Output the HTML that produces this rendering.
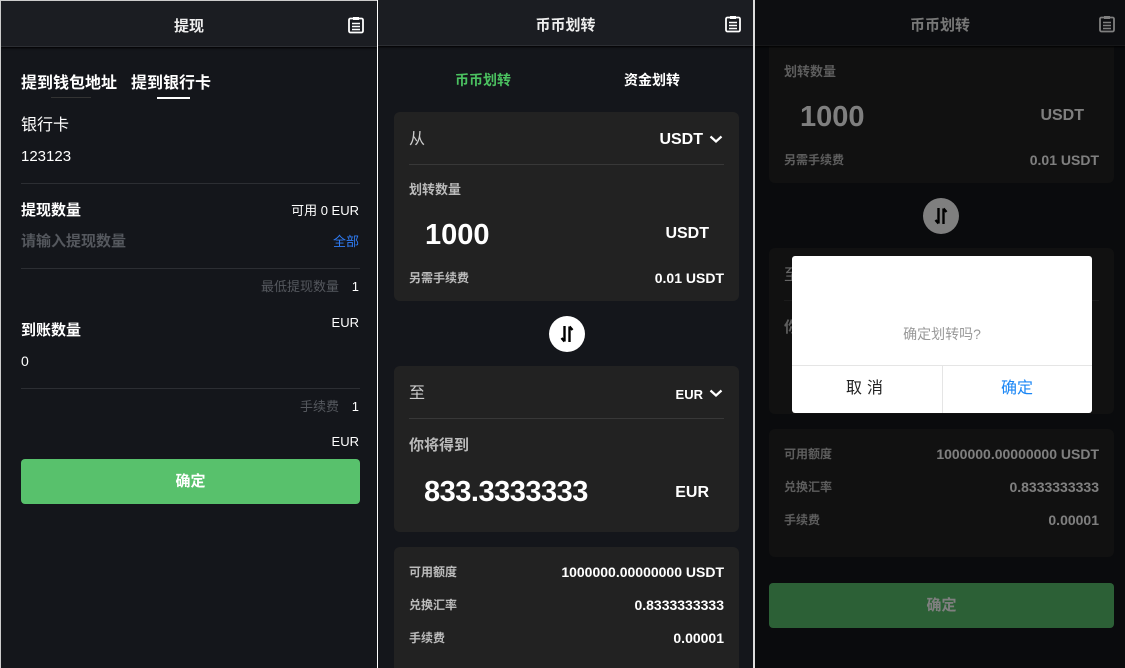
<!DOCTYPE html>
<html><head><meta charset="utf-8">
<style>
*{margin:0;padding:0;box-sizing:border-box}
body{width:1125px;height:668px;background:#fff;position:relative;overflow:hidden;font-family:"Liberation Sans","Noto Sans CJK SC",sans-serif;color:#fff}
.p{position:absolute;top:0;height:668px;background:#14161b;overflow:hidden}
.hd{position:absolute;left:0;right:0;top:0;height:46px;background:#1b1d22;border-bottom:1px solid #2c2e33;box-shadow:0 1px 2px #000}
.hd .tt{position:absolute;left:0;right:0;top:14px;text-align:center;font-size:15px;font-weight:bold;color:#eee}
.ic{position:absolute;top:15px}
.a{position:absolute;white-space:nowrap;line-height:1}
.r{text-align:right}
.line{position:absolute;height:1px;background:#2c2e33}
.card{position:absolute;background:#222;border-radius:6px}
.circ{position:absolute;width:36px;height:36px;border-radius:50%;background:#fff}
</style></head><body>

<!-- Panel 1 -->
<div class="p" style="left:0;width:377px;border-top:1px solid #ccc;border-left:1px solid #ccc">
 <div class="hd"><div class="tt">提现</div>
  <svg class="ic" style="left:346px" width="18" height="18" viewBox="0 0 18 18"><rect x="2" y="2.5" width="14" height="14" rx="1.5" fill="none" stroke="#fff" stroke-width="1.8"/><rect x="6" y="1" width="6" height="3" fill="#fff"/><path d="M5 7.5h8M5 10.5h8M5 13.5h8" stroke="#fff" stroke-width="1.6"/></svg>
 </div>
 <div class="a" style="left:20px;top:75px;font-size:16px;font-weight:bold">提到钱包地址</div>
 <div class="a" style="left:130px;top:75px;font-size:16px;font-weight:bold">提到银行卡</div>
 <div style="position:absolute;left:50px;top:96px;width:40px;height:1px;background:#333"></div>
 <div style="position:absolute;left:156px;top:96px;width:33px;height:2px;background:#fff"></div>
 <div class="a" style="left:20px;top:117px;font-size:16px">银行卡</div>
 <div class="a" style="left:20px;top:148px;font-size:15px">123123</div>
 <div class="line" style="left:20px;width:339px;top:182px"></div>
 <div class="a" style="left:20px;top:202px;font-size:15px;font-weight:bold">提现数量</div>
 <div class="a r" style="right:18px;top:203px;font-size:13px">可用 0 EUR</div>
 <div class="a" style="left:20px;top:233px;font-size:15px;color:#55585e;font-weight:bold">请输入提现数量</div>
 <div class="a r" style="right:18px;top:234px;font-size:13px;color:#2f7cf6">全部</div>
 <div class="line" style="left:20px;width:339px;top:267px"></div>
 <div class="a r" style="right:38px;top:279px;font-size:13px;color:#55585e">最低提现数量</div>
 <div class="a r" style="right:18px;top:279px;font-size:13px">1</div>
 <div class="a r" style="right:18px;top:315px;font-size:13px">EUR</div>
 <div class="a" style="left:20px;top:322px;font-size:15px;font-weight:bold">到账数量</div>
 <div class="a" style="left:20px;top:353px;font-size:14px">0</div>
 <div class="line" style="left:20px;width:339px;top:387px"></div>
 <div class="a r" style="right:38px;top:399px;font-size:13px;color:#55585e">手续费</div>
 <div class="a r" style="right:18px;top:399px;font-size:13px">1</div>
 <div class="a r" style="right:18px;top:434px;font-size:13px">EUR</div>
 <div style="position:absolute;left:20px;top:458px;width:339px;height:45px;background:#58c16c;border-radius:4px;text-align:center;line-height:45px;font-size:15px;font-weight:bold">确定</div>
</div>

<!-- Panel 2 -->
<div class="p" style="left:378px;width:375px">
 <div class="hd"><div class="tt">币币划转</div>
  <svg class="ic" style="left:346px" width="18" height="18" viewBox="0 0 18 18"><rect x="2" y="2.5" width="14" height="14" rx="1.5" fill="none" stroke="#fff" stroke-width="1.8"/><rect x="6" y="1" width="6" height="3" fill="#fff"/><path d="M5 7.5h8M5 10.5h8M5 13.5h8" stroke="#fff" stroke-width="1.6"/></svg>
 </div>
 <div class="a" style="left:77px;top:73px;font-size:14px;font-weight:bold;color:#4bc160">币币划转</div>
 <div class="a" style="left:246px;top:73px;font-size:14px;font-weight:bold">资金划转</div>
 <div class="card" style="left:16px;top:112px;width:345px;height:189px">
  <div class="a" style="left:15px;top:20px;font-size:16px;color:#ccc">从</div>
  <div class="a r" style="right:36px;top:20px;font-size:16px;font-weight:bold">USDT</div>
  <svg style="position:absolute;right:16px;top:23px" width="14" height="9" viewBox="0 0 14 9"><path d="M1.5 1.5L7 6.5 12.5 1.5" fill="none" stroke="#fff" stroke-width="2.2"/></svg>
  <div class="line" style="left:15px;right:15px;top:52px;background:#383838"></div>
  <div class="a" style="left:15px;top:71px;font-size:13px;color:#bbb;font-weight:bold">划转数量</div>
  <div class="a" style="left:31px;top:109px;font-size:29px;font-weight:bold">1000</div>
  <div class="a r" style="right:30px;top:114px;font-size:16px;font-weight:bold">USDT</div>
  <div class="a" style="left:15px;top:160px;font-size:12px;color:#bbb;font-weight:bold">另需手续费</div>
  <div class="a r" style="right:15px;top:159px;font-size:14px;font-weight:bold">0.01 USDT</div>
 </div>
 <div class="circ" style="left:171px;top:316px"><svg width="36" height="36" viewBox="0 0 36 36"><path d="M15.5 10v15.5M15.5 25.5l-3-3.5M20.5 26V10.5M20.5 10.5l3 3.5" fill="none" stroke="#000" stroke-width="2.4"/></svg></div>
 <div class="card" style="left:16px;top:366px;width:345px;height:166px">
  <div class="a" style="left:15px;top:20px;font-size:16px;color:#ccc">至</div>
  <div class="a r" style="right:36px;top:22px;font-size:13px;font-weight:bold">EUR</div>
  <svg style="position:absolute;right:16px;top:23px" width="14" height="9" viewBox="0 0 14 9"><path d="M1.5 1.5L7 6.5 12.5 1.5" fill="none" stroke="#fff" stroke-width="2.2"/></svg>
  <div class="line" style="left:15px;right:15px;top:52px;background:#383838"></div>
  <div class="a" style="left:15px;top:72px;font-size:15px;color:#bbb;font-weight:bold">你将得到</div>
  <div class="a" style="left:30px;top:112px;font-size:29px;font-weight:bold;letter-spacing:-0.5px">833.3333333</div>
  <div class="a r" style="right:30px;top:119px;font-size:16px;font-weight:bold">EUR</div>
 </div>
 <div class="card" style="left:16px;top:547px;width:345px;height:140px">
  <div class="a" style="left:15px;top:19px;font-size:12px;color:#bbb;font-weight:bold">可用额度</div>
  <div class="a r" style="right:15px;top:18px;font-size:14px;font-weight:bold">1000000.00000000 USDT</div>
  <div class="a" style="left:15px;top:52px;font-size:12px;color:#bbb;font-weight:bold">兑换汇率</div>
  <div class="a r" style="right:15px;top:51px;font-size:14px;font-weight:bold">0.8333333333</div>
  <div class="a" style="left:15px;top:85px;font-size:12px;color:#bbb;font-weight:bold">手续费</div>
  <div class="a r" style="right:15px;top:84px;font-size:14px;font-weight:bold">0.00001</div>
 </div>
</div>
<div style="position:absolute;left:753px;top:0;width:2px;height:668px;background:#ddd"></div>

<!-- Panel 3 -->
<div class="p" style="left:755px;width:370px">
 <div class="card" style="left:14px;top:-6px;width:345px;height:189px">
  <div class="a" style="left:15px;top:71px;font-size:13px;color:#bbb;font-weight:bold">划转数量</div>
  <div class="a" style="left:31px;top:109px;font-size:29px;font-weight:bold">1000</div>
  <div class="a r" style="right:30px;top:114px;font-size:16px;font-weight:bold">USDT</div>
  <div class="a" style="left:15px;top:160px;font-size:12px;color:#bbb;font-weight:bold">另需手续费</div>
  <div class="a r" style="right:15px;top:159px;font-size:14px;font-weight:bold">0.01 USDT</div>
 </div>
 <div class="hd"><div class="tt">币币划转</div>
  <svg class="ic" style="left:343px" width="18" height="18" viewBox="0 0 18 18"><rect x="2" y="2.5" width="14" height="14" rx="1.5" fill="none" stroke="#fff" stroke-width="1.8"/><rect x="6" y="1" width="6" height="3" fill="#fff"/><path d="M5 7.5h8M5 10.5h8M5 13.5h8" stroke="#fff" stroke-width="1.6"/></svg>
 </div>
 <div class="circ" style="left:168px;top:198px"><svg width="36" height="36" viewBox="0 0 36 36"><path d="M15.5 10v15.5M15.5 25.5l-3-3.5M20.5 26V10.5M20.5 10.5l3 3.5" fill="none" stroke="#000" stroke-width="2.4"/></svg></div>
 <div class="card" style="left:14px;top:248px;width:345px;height:166px">
  <div class="a" style="left:15px;top:20px;font-size:16px;color:#ccc">至</div>
  <div class="a r" style="right:36px;top:22px;font-size:13px;font-weight:bold">EUR</div>
  <div class="line" style="left:15px;right:15px;top:52px;background:#383838"></div>
  <div class="a" style="left:15px;top:72px;font-size:15px;color:#bbb;font-weight:bold">你将得到</div>
 </div>
 <div class="card" style="left:14px;top:429px;width:345px;height:128px">
  <div class="a" style="left:15px;top:19px;font-size:12px;color:#bbb;font-weight:bold">可用额度</div>
  <div class="a r" style="right:15px;top:18px;font-size:14px;font-weight:bold">1000000.00000000 USDT</div>
  <div class="a" style="left:15px;top:52px;font-size:12px;color:#bbb;font-weight:bold">兑换汇率</div>
  <div class="a r" style="right:15px;top:51px;font-size:14px;font-weight:bold">0.8333333333</div>
  <div class="a" style="left:15px;top:85px;font-size:12px;color:#bbb;font-weight:bold">手续费</div>
  <div class="a r" style="right:15px;top:84px;font-size:14px;font-weight:bold">0.00001</div>
 </div>
 <div style="position:absolute;left:14px;top:583px;width:345px;height:45px;background:#58c16c;border-radius:4px;text-align:center;line-height:45px;font-size:15px;font-weight:bold">确定</div>
 <div style="position:absolute;left:0;top:0;width:370px;height:668px;background:rgba(0,0,0,0.5)"></div>
 <div style="position:absolute;left:37px;top:256px;width:300px;height:157px;background:#fff;border-radius:3px;overflow:hidden">
  <div class="a" style="left:0;right:0;top:71px;text-align:center;font-size:14px;color:#999">确定划转吗?</div>
  <div style="position:absolute;left:0;right:0;top:109px;height:1px;background:#e5e5e5"></div>
  <div style="position:absolute;left:150px;top:109px;width:1px;height:48px;background:#e5e5e5"></div>
  <div class="a" style="left:0;width:150px;top:125px;text-align:center;font-size:16px;color:#222;letter-spacing:5px">取消</div>
  <div class="a" style="left:150px;width:150px;top:125px;text-align:center;font-size:16px;color:#1a86f5">确定</div>
 </div>
</div>
</body></html>
